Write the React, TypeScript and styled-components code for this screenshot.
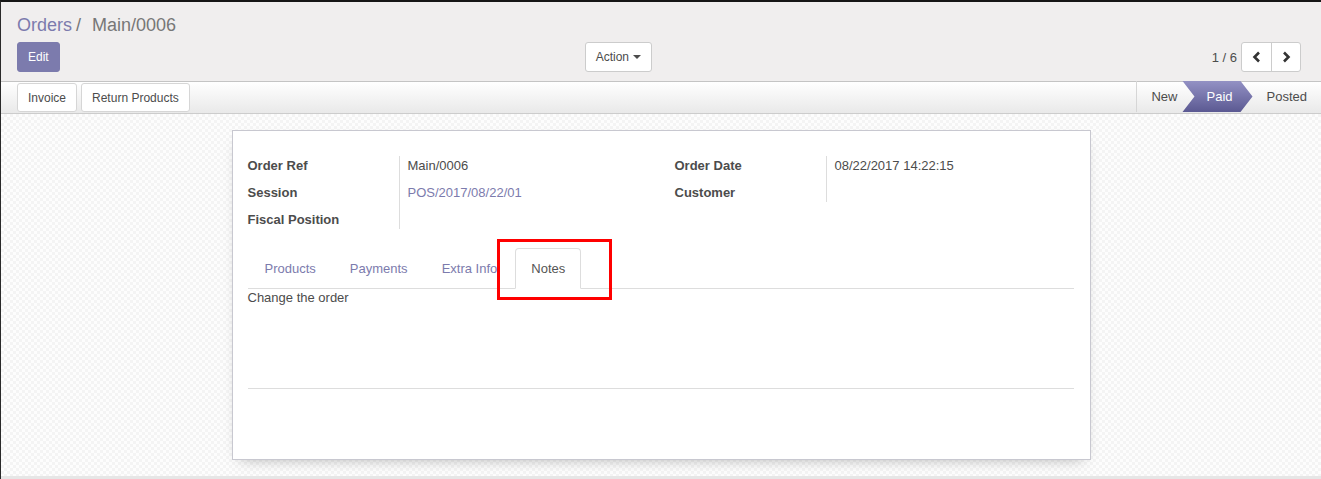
import React from 'react';
import styled, { createGlobalStyle } from 'styled-components';

const Global = createGlobalStyle`
  html, body {
    margin: 0;
    padding: 0;
  }
  body {
    font-family: "Liberation Sans", Arial, sans-serif;
    font-size: 13px;
    color: #4c4c4c;
    background: #fff;
  }
`;

const Page = styled.div`
  border-top: 2px solid #161616;
  border-left: 1px solid #2a2a2a;
  height: 479px;
  display: flex;
  flex-direction: column;
  box-sizing: border-box;
  overflow: hidden;
`;

const ControlPanel = styled.div`
  background: #f0eeee;
  border-bottom: 1px solid #c4c4c4;
  padding: 8px 20px 9px 16px;
`;

const Breadcrumb = styled.div`
  font-size: 18px;
  line-height: 30px;
  height: 30px;
  margin-bottom: 2px;
  color: #777;
`;

const Crumb = styled.a`
  color: #7c7bad;
  text-decoration: none;
`;

const Sep = styled.span`
  color: #777;
  margin: 0 11px 0 4px;
`;

const CpRow = styled.div`
  display: grid;
  grid-template-columns: 1fr 1fr;
  height: 30px;
`;

const CpLeft = styled.div`
  display: flex;
  justify-content: space-between;
  padding-right: 7px;
`;

const CpRight = styled.div`
  display: flex;
  justify-content: flex-end;
  align-items: center;
`;

const Button = styled.button<{ $primary?: boolean }>`
  font-family: inherit;
  font-size: 12px;
  line-height: 18px;
  padding: 5px 10px;
  height: 30px;
  border-radius: 3px;
  border: 1px solid ${(p) => (p.$primary ? '#7c7bad' : '#ccc')};
  background: ${(p) => (p.$primary ? '#7c7bad' : '#fff')};
  color: ${(p) => (p.$primary ? '#fff' : '#4c4c4c')};
  display: inline-flex;
  align-items: center;
  gap: 4px;
  cursor: pointer;
`;

const Caret = styled.span`
  display: inline-block;
  border-top: 4px solid #4c4c4c;
  border-left: 4px solid transparent;
  border-right: 4px solid transparent;
`;

const PagerValue = styled.span`
  font-size: 13px;
  margin-right: 4px;
`;

const PagerGroup = styled.div`
  display: flex;
  border: 1px solid #ccc;
  border-radius: 3px;
  background: #fff;
  height: 30px;
  box-sizing: border-box;
`;

const PagerBtn = styled.button`
  width: 29px;
  border: none;
  background: transparent;
  display: flex;
  align-items: center;
  justify-content: center;
  padding: 0;
  & + & {
    border-left: 1px solid #ccc;
  }
`;

const StatusBar = styled.div`
  height: 31px;
  border-bottom: 1px solid #ccc;
  background: linear-gradient(to bottom, #ffffff, #e9e9e9);
  display: flex;
  justify-content: space-between;
  padding-left: 16px;
`;

const StatusButtons = styled.div`
  display: flex;
  gap: 4px;
  padding-top: 1px;
`;

const BarButton = styled.button`
  font-family: inherit;
  font-size: 12px;
  height: 29px;
  padding: 0 10px;
  border: 1px solid #d6d6d6;
  border-radius: 3px;
  background: #fff;
  color: #4c4c4c;
`;

const Stages = styled.div`
  display: flex;
  align-items: stretch;
  height: 31px;
  margin-top: -1px;
`;

const Stage = styled.div<{ $active?: boolean; $first?: boolean }>`
  display: flex;
  align-items: center;
  font-size: 13px;
  padding: ${(p) => (p.$active ? '0 20px 0 24px' : p.$first ? '0 15px 0 14px' : '0 14px 0 14px')};
  margin-left: ${(p) => (p.$active ? '-10px' : '0')};
  border-left: ${(p) => (p.$first ? '1px solid #d6d6d6' : 'none')};
  color: ${(p) => (p.$active ? '#fff' : '#4c4c4c')};
  background: ${(p) => (p.$active ? 'linear-gradient(to bottom, #9391c4, #5b5992)' : 'transparent')};
  clip-path: ${(p) =>
    p.$active
      ? 'polygon(0 0, calc(100% - 12px) 0, 100% 50%, calc(100% - 12px) 100%, 0 100%, 12px 50%)'
      : 'none'};
`;

const SheetBg = styled.div`
  flex: 1;
  background: repeating-conic-gradient(#f4f4f4 0 25%, #fdfdfd 0 50%) 0 0 / 6px 6px;
  border-bottom: 3px solid #e6e6e6;
  padding-top: 16px;
`;

const Sheet = styled.div`
  width: 859px;
  margin: 0 auto;
  box-sizing: border-box;
  background: #fff;
  border: 1px solid #c8c8d0;
  box-shadow: 0 6px 14px -8px rgba(0, 0, 0, 0.35);
  padding: 21px 16px 70px 15px;
`;

const Groups = styled.div`
  display: grid;
  grid-template-columns: 1fr 1fr;
`;

const Group = styled.div<{ $right?: boolean }>`
  display: grid;
  grid-template-columns: 151px 1fr;
  grid-auto-rows: 27px;
  align-content: start;
  padding-left: ${(p) => (p.$right ? '14px' : '0')};
`;

const Label = styled.div`
  font-weight: bold;
  line-height: 27px;
  color: #4c4c4c;
`;

const Value = styled.div<{ $link?: boolean; $first?: boolean; $last?: boolean }>`
  border-left: 1px solid #ddd;
  padding-left: 8px;
  color: ${(p) => (p.$link ? '#7c7bad' : '#4c4c4c')};
  margin-top: ${(p) => (p.$first ? '4px' : '0')};
  margin-bottom: ${(p) => (p.$last ? '4px' : '0')};
  line-height: ${(p) => (p.$first ? '20px' : p.$last ? '23px' : '27px')};
`;

const TabsWrap = styled.div`
  position: relative;
  margin-top: 15px;
`;

const TabNav = styled.ul`
  list-style: none;
  margin: 0;
  padding: 0 0 0 1px;
  display: flex;
  border-bottom: 1px solid #ddd;
`;

const Tab = styled.li<{ $active?: boolean }>`
  margin: 0 2px -1px 0;
  padding: 10px 15px;
  line-height: 19px;
  border: 1px solid ${(p) => (p.$active ? '#ddd' : 'transparent')};
  border-bottom-color: ${(p) => (p.$active ? '#fff' : 'transparent')};
  border-radius: 4px 4px 0 0;
  background: ${(p) => (p.$active ? '#fff' : 'transparent')};
  color: ${(p) => (p.$active ? '#555' : '#7c7bad')};
`;

const Highlight = styled.div`
  position: absolute;
  left: 249px;
  top: -9px;
  width: 115px;
  height: 61px;
  box-sizing: border-box;
  border: 3px solid #f00;
  pointer-events: none;
`;

const NoteBody = styled.div`
  height: 100px;
  border-bottom: 1px solid #ddd;
  line-height: 17px;
  box-sizing: border-box;
`;

const Chevron = ({ dir }: { dir: 'left' | 'right' }) => (
  <svg width="10" height="12" viewBox="0 0 10 12">
    <polyline
      points={dir === 'left' ? '7,1.5 2.5,6 7,10.5' : '3,1.5 7.5,6 3,10.5'}
      fill="none"
      stroke="#333"
      strokeWidth="2.6"
      strokeLinejoin="miter"
    />
  </svg>
);

export default function App() {
  return (
    <>
      <Global />
      <Page>
        <ControlPanel>
          <Breadcrumb>
            <Crumb>Orders</Crumb>
            <Sep>/</Sep>
            <span>Main/0006</span>
          </Breadcrumb>
          <CpRow>
            <CpLeft>
              <Button $primary>Edit</Button>
              <Button>
                Action <Caret />
              </Button>
            </CpLeft>
            <CpRight>
              <PagerValue>1 / 6</PagerValue>
              <PagerGroup>
                <PagerBtn>
                  <Chevron dir="left" />
                </PagerBtn>
                <PagerBtn>
                  <Chevron dir="right" />
                </PagerBtn>
              </PagerGroup>
            </CpRight>
          </CpRow>
        </ControlPanel>
        <StatusBar>
          <StatusButtons>
            <BarButton>Invoice</BarButton>
            <BarButton>Return Products</BarButton>
          </StatusButtons>
          <Stages>
            <Stage $first>New</Stage>
            <Stage $active>Paid</Stage>
            <Stage>Posted</Stage>
          </Stages>
        </StatusBar>
        <SheetBg>
          <Sheet>
            <Groups>
              <Group>
                <Label>Order Ref</Label>
                <Value $first>Main/0006</Value>
                <Label>Session</Label>
                <Value $link>POS/2017/08/22/01</Value>
                <Label>Fiscal Position</Label>
                <Value $last />
              </Group>
              <Group $right>
                <Label>Order Date</Label>
                <Value $first>08/22/2017 14:22:15</Value>
                <Label>Customer</Label>
                <Value $last />
              </Group>
            </Groups>
            <TabsWrap>
              <TabNav>
                <Tab>Products</Tab>
                <Tab>Payments</Tab>
                <Tab>Extra Info</Tab>
                <Tab $active>Notes</Tab>
              </TabNav>
              <Highlight />
              <NoteBody>Change the order</NoteBody>
            </TabsWrap>
          </Sheet>
        </SheetBg>
      </Page>
    </>
  );
}
